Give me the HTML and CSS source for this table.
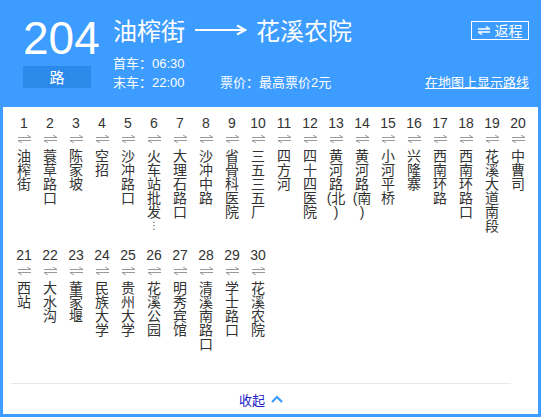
FILE: index.html
```html
<!DOCTYPE html>
<html lang="zh-CN">
<head>
<meta charset="utf-8">
<title>204路</title>
<link rel="stylesheet" href="styles.css">
</head>
<body>
<div class="card">
  <header class="head">
    <div class="line-no">
      <div class="num">204</div>
      <div class="lu">路</div>
    </div>
    <div class="info">
      <div class="title-row">
        <div class="title">
          <span>油榨街</span>
          <svg class="arrow" width="52" height="14" viewBox="0 0 52 14"><path d="M0 7H50M42 2.5L50.5 7L42 11.5" fill="none" stroke="#fff" stroke-width="2"/></svg>
          <span>花溪农院</span>
        </div>
        <button class="back" type="button">
          <svg width="12" height="9" viewBox="0 0 12 9"><path d="M0 3H12M12 3L8 0.5M12 6H0M0 6L4 8.5" fill="none" stroke="#fff" stroke-width="1.3"/></svg>
          <span>返程</span>
        </button>
      </div>
      <div class="meta first-line">首车：06:30</div>
      <div class="meta">
        <span class="last">末车：22:00</span>
        <span>票价：最高票价2元</span>
        <a class="map" href="#">在地图上显示路线</a>
      </div>
    </div>
  </header>
  <div class="stops">
    <div class="stop"><span class="no">1</span><svg class="dir" width="13" height="8" viewBox="0 0 13 8"><path d="M0 2.5H13M13 2.5L9 0M13 5.5H0M0 5.5L4 8" fill="none" stroke="#9a9a9a" stroke-width="1"/></svg><span class="name">油榨街</span></div>
    <div class="stop"><span class="no">2</span><svg class="dir" width="13" height="8" viewBox="0 0 13 8"><path d="M0 2.5H13M13 2.5L9 0M13 5.5H0M0 5.5L4 8" fill="none" stroke="#9a9a9a" stroke-width="1"/></svg><span class="name">蓑草路口</span></div>
    <div class="stop"><span class="no">3</span><svg class="dir" width="13" height="8" viewBox="0 0 13 8"><path d="M0 2.5H13M13 2.5L9 0M13 5.5H0M0 5.5L4 8" fill="none" stroke="#9a9a9a" stroke-width="1"/></svg><span class="name">陈家坡</span></div>
    <div class="stop"><span class="no">4</span><svg class="dir" width="13" height="8" viewBox="0 0 13 8"><path d="M0 2.5H13M13 2.5L9 0M13 5.5H0M0 5.5L4 8" fill="none" stroke="#9a9a9a" stroke-width="1"/></svg><span class="name">空招</span></div>
    <div class="stop"><span class="no">5</span><svg class="dir" width="13" height="8" viewBox="0 0 13 8"><path d="M0 2.5H13M13 2.5L9 0M13 5.5H0M0 5.5L4 8" fill="none" stroke="#9a9a9a" stroke-width="1"/></svg><span class="name">沙冲路口</span></div>
    <div class="stop"><span class="no">6</span><svg class="dir" width="13" height="8" viewBox="0 0 13 8"><path d="M0 2.5H13M13 2.5L9 0M13 5.5H0M0 5.5L4 8" fill="none" stroke="#9a9a9a" stroke-width="1"/></svg><span class="name">火车站批发</span><span class="more">⋮</span></div>
    <div class="stop"><span class="no">7</span><svg class="dir" width="13" height="8" viewBox="0 0 13 8"><path d="M0 2.5H13M13 2.5L9 0M13 5.5H0M0 5.5L4 8" fill="none" stroke="#9a9a9a" stroke-width="1"/></svg><span class="name">大理石路口</span></div>
    <div class="stop"><span class="no">8</span><svg class="dir" width="13" height="8" viewBox="0 0 13 8"><path d="M0 2.5H13M13 2.5L9 0M13 5.5H0M0 5.5L4 8" fill="none" stroke="#9a9a9a" stroke-width="1"/></svg><span class="name">沙冲中路</span></div>
    <div class="stop"><span class="no">9</span><svg class="dir" width="13" height="8" viewBox="0 0 13 8"><path d="M0 2.5H13M13 2.5L9 0M13 5.5H0M0 5.5L4 8" fill="none" stroke="#9a9a9a" stroke-width="1"/></svg><span class="name">省骨科医院</span></div>
    <div class="stop"><span class="no">10</span><svg class="dir" width="13" height="8" viewBox="0 0 13 8"><path d="M0 2.5H13M13 2.5L9 0M13 5.5H0M0 5.5L4 8" fill="none" stroke="#9a9a9a" stroke-width="1"/></svg><span class="name">三五三五厂</span></div>
    <div class="stop"><span class="no">11</span><svg class="dir" width="13" height="8" viewBox="0 0 13 8"><path d="M0 2.5H13M13 2.5L9 0M13 5.5H0M0 5.5L4 8" fill="none" stroke="#9a9a9a" stroke-width="1"/></svg><span class="name">四方河</span></div>
    <div class="stop"><span class="no">12</span><svg class="dir" width="13" height="8" viewBox="0 0 13 8"><path d="M0 2.5H13M13 2.5L9 0M13 5.5H0M0 5.5L4 8" fill="none" stroke="#9a9a9a" stroke-width="1"/></svg><span class="name">四十四医院</span></div>
    <div class="stop"><span class="no">13</span><svg class="dir" width="13" height="8" viewBox="0 0 13 8"><path d="M0 2.5H13M13 2.5L9 0M13 5.5H0M0 5.5L4 8" fill="none" stroke="#9a9a9a" stroke-width="1"/></svg><span class="name">黄河路(北<br>)</span></div>
    <div class="stop"><span class="no">14</span><svg class="dir" width="13" height="8" viewBox="0 0 13 8"><path d="M0 2.5H13M13 2.5L9 0M13 5.5H0M0 5.5L4 8" fill="none" stroke="#9a9a9a" stroke-width="1"/></svg><span class="name">黄河路(南<br>)</span></div>
    <div class="stop"><span class="no">15</span><svg class="dir" width="13" height="8" viewBox="0 0 13 8"><path d="M0 2.5H13M13 2.5L9 0M13 5.5H0M0 5.5L4 8" fill="none" stroke="#9a9a9a" stroke-width="1"/></svg><span class="name">小河平桥</span></div>
    <div class="stop"><span class="no">16</span><svg class="dir" width="13" height="8" viewBox="0 0 13 8"><path d="M0 2.5H13M13 2.5L9 0M13 5.5H0M0 5.5L4 8" fill="none" stroke="#9a9a9a" stroke-width="1"/></svg><span class="name">兴隆寨</span></div>
    <div class="stop"><span class="no">17</span><svg class="dir" width="13" height="8" viewBox="0 0 13 8"><path d="M0 2.5H13M13 2.5L9 0M13 5.5H0M0 5.5L4 8" fill="none" stroke="#9a9a9a" stroke-width="1"/></svg><span class="name">西南环路</span></div>
    <div class="stop"><span class="no">18</span><svg class="dir" width="13" height="8" viewBox="0 0 13 8"><path d="M0 2.5H13M13 2.5L9 0M13 5.5H0M0 5.5L4 8" fill="none" stroke="#9a9a9a" stroke-width="1"/></svg><span class="name">西南环路口</span></div>
    <div class="stop"><span class="no">19</span><svg class="dir" width="13" height="8" viewBox="0 0 13 8"><path d="M0 2.5H13M13 2.5L9 0M13 5.5H0M0 5.5L4 8" fill="none" stroke="#9a9a9a" stroke-width="1"/></svg><span class="name">花溪大道南段</span></div>
    <div class="stop"><span class="no">20</span><svg class="dir" width="13" height="8" viewBox="0 0 13 8"><path d="M0 2.5H13M13 2.5L9 0M13 5.5H0M0 5.5L4 8" fill="none" stroke="#9a9a9a" stroke-width="1"/></svg><span class="name">中曹司</span></div>
    <div class="stop"><span class="no">21</span><svg class="dir" width="13" height="8" viewBox="0 0 13 8"><path d="M0 2.5H13M13 2.5L9 0M13 5.5H0M0 5.5L4 8" fill="none" stroke="#9a9a9a" stroke-width="1"/></svg><span class="name">西站</span></div>
    <div class="stop"><span class="no">22</span><svg class="dir" width="13" height="8" viewBox="0 0 13 8"><path d="M0 2.5H13M13 2.5L9 0M13 5.5H0M0 5.5L4 8" fill="none" stroke="#9a9a9a" stroke-width="1"/></svg><span class="name">大水沟</span></div>
    <div class="stop"><span class="no">23</span><svg class="dir" width="13" height="8" viewBox="0 0 13 8"><path d="M0 2.5H13M13 2.5L9 0M13 5.5H0M0 5.5L4 8" fill="none" stroke="#9a9a9a" stroke-width="1"/></svg><span class="name">董家堰</span></div>
    <div class="stop"><span class="no">24</span><svg class="dir" width="13" height="8" viewBox="0 0 13 8"><path d="M0 2.5H13M13 2.5L9 0M13 5.5H0M0 5.5L4 8" fill="none" stroke="#9a9a9a" stroke-width="1"/></svg><span class="name">民族大学</span></div>
    <div class="stop"><span class="no">25</span><svg class="dir" width="13" height="8" viewBox="0 0 13 8"><path d="M0 2.5H13M13 2.5L9 0M13 5.5H0M0 5.5L4 8" fill="none" stroke="#9a9a9a" stroke-width="1"/></svg><span class="name">贵州大学</span></div>
    <div class="stop"><span class="no">26</span><svg class="dir" width="13" height="8" viewBox="0 0 13 8"><path d="M0 2.5H13M13 2.5L9 0M13 5.5H0M0 5.5L4 8" fill="none" stroke="#9a9a9a" stroke-width="1"/></svg><span class="name">花溪公园</span></div>
    <div class="stop"><span class="no">27</span><svg class="dir" width="13" height="8" viewBox="0 0 13 8"><path d="M0 2.5H13M13 2.5L9 0M13 5.5H0M0 5.5L4 8" fill="none" stroke="#9a9a9a" stroke-width="1"/></svg><span class="name">明秀宾馆</span></div>
    <div class="stop"><span class="no">28</span><svg class="dir" width="13" height="8" viewBox="0 0 13 8"><path d="M0 2.5H13M13 2.5L9 0M13 5.5H0M0 5.5L4 8" fill="none" stroke="#9a9a9a" stroke-width="1"/></svg><span class="name">清溪南路口</span></div>
    <div class="stop"><span class="no">29</span><svg class="dir" width="13" height="8" viewBox="0 0 13 8"><path d="M0 2.5H13M13 2.5L9 0M13 5.5H0M0 5.5L4 8" fill="none" stroke="#9a9a9a" stroke-width="1"/></svg><span class="name">学士路口</span></div>
    <div class="stop"><span class="no">30</span><svg class="dir" width="13" height="8" viewBox="0 0 13 8"><path d="M0 2.5H13M13 2.5L9 0M13 5.5H0M0 5.5L4 8" fill="none" stroke="#9a9a9a" stroke-width="1"/></svg><span class="name">花溪农院</span></div>
  </div>
  <div class="foot">
    <span>收起</span>
    <svg width="12" height="8" viewBox="0 0 12 8"><path d="M1 7L6 2L11 7" fill="none" stroke="#3d9cff" stroke-width="2.2"/></svg>
  </div>
</div>
</body>
</html>
```
FILE: styles.css
```css
* {
  box-sizing: border-box;
  margin: 0;
  padding: 0;
}

body {
  margin: 0;
  background: #fff;
  color: #333;
  font-family: "Liberation Sans", "Noto Sans CJK SC", sans-serif;
}

.card {
  width: 541px;
  height: 417px;
  border: 3px solid #3d9cff;
  display: flex;
  flex-direction: column;
}

.head {
  height: 104px;
  flex: none;
  background: #3d9cff;
  color: #fff;
  display: flex;
  padding: 12px 9px 0 20px;
}

.line-no {
  width: 68px;
  text-align: center;
}

.num {
  font-size: 46px;
  line-height: 46px;
}

.lu {
  margin-top: 5px;
  height: 22px;
  line-height: 22px;
  background: #2b89ea;
  font-size: 15px;
  font-family: "Noto Sans CJK SC", sans-serif;
}

.info {
  flex: 1;
  margin-left: 22px;
}

.title-row {
  display: flex;
  align-items: center;
  height: 30px;
}

.title {
  display: flex;
  align-items: center;
  font-family: "Noto Sans CJK SC", sans-serif;
  font-size: 24px;
  line-height: 30px;
}

.arrow {
  margin: 0 9px 0 10px;
}

.back {
  margin-left: auto;
  width: 58px;
  height: 19px;
  border: 1px solid #fff;
  background: transparent;
  color: #fff;
  display: flex;
  align-items: center;
  justify-content: center;
  gap: 5px;
  font-family: "Noto Sans CJK SC", sans-serif;
  font-size: 14px;
  line-height: 17px;
}

.meta {
  display: flex;
  font-size: 13px;
  line-height: 19px;
}

.first-line {
  margin-top: 9px;
}

.last {
  width: 107px;
}

.map {
  margin-left: auto;
  color: #fff;
  text-decoration: underline;
}

.stops {
  height: 276px;
  flex: none;
  display: grid;
  grid-template-columns: repeat(20, 26px);
  grid-auto-rows: 132px;
  padding: 8px 0 0 8px;
}

.stop {
  display: flex;
  flex-direction: column;
  align-items: center;
}

.no {
  font-size: 14px;
  line-height: 16px;
  color: #333;
}

.dir {
  margin-top: 4px;
  flex: none;
}

.name {
  width: 20px;
  margin-top: 6px;
  font-size: 14px;
  line-height: 14px;
  text-align: center;
  word-break: break-all;
  color: #333;
}

.more {
  display: block;
  height: 12px;
  margin-top: 1px;
  font-family: "DejaVu Sans", sans-serif;
  font-size: 10px;
  line-height: 12px;
  color: #555;
  overflow: hidden;
}

.foot {
  width: 500px;
  height: 31px;
  flex: none;
  margin-left: 8px;
  border-top: 1px solid #e8e8e8;
  display: flex;
  align-items: center;
  justify-content: center;
  gap: 6px;
  font-family: "Noto Sans CJK SC", sans-serif;
  font-size: 13px;
  color: #2121c4;
}
```
